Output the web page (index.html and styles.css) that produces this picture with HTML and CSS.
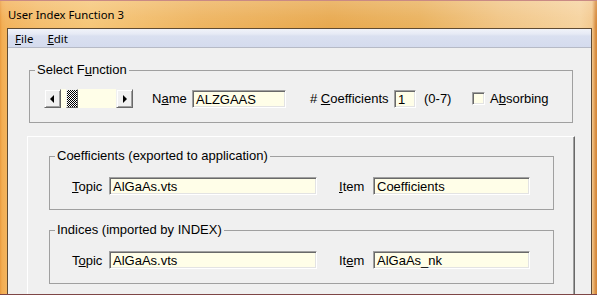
FILE: index.html
```html
<!DOCTYPE html>
<html>
<head>
<meta charset="utf-8">
<title>User Index Function 3</title>
<link rel="stylesheet" href="styles.css">
</head>
<body>
<div class="window">
  <div class="titlebar">User Index Function 3</div>
  <div class="frame">
    <div class="client">
      <div class="menubar">
        <span class="menu-item"><u>F</u>ile</span>
        <span class="menu-item"><u>E</u>dit</span>
      </div>
      <div class="content">
        <fieldset class="group group-select">
          <legend>Select F<u>u</u>nction</legend>
          <div class="row row-select">
            <div class="hscroll">
              <div class="sb-btn"><span class="arrow arrow-left"></span></div>
              <div class="sb-track"><div class="sb-thumb"></div></div>
              <div class="sb-btn"><span class="arrow arrow-right"></span></div>
            </div>
            <span class="label label-name">N<u>a</u>me</span>
            <div class="field field-name">ALZGAAS</div>
            <span class="label label-coef"># <u>C</u>oefficients</span>
            <div class="field field-coef">1</div>
            <span class="label label-range">(0-7)</span>
            <span class="checkbox"></span>
            <span class="label label-abs">A<u>b</u>sorbing</span>
          </div>
        </fieldset>
        <div class="panel">
          <fieldset class="group group-sub">
            <legend>Coefficients (exported to application)</legend>
            <div class="row row-sub">
              <span class="label label-topic"><u>T</u>opic</span>
              <div class="field field-topic">AlGaAs.vts</div>
              <span class="label label-item"><u>I</u>tem</span>
              <div class="field field-item">Coefficients</div>
            </div>
          </fieldset>
          <fieldset class="group group-sub group-second">
            <legend>Indices (imported by INDEX)</legend>
            <div class="row row-sub">
              <span class="label label-topic">T<u>o</u>pic</span>
              <div class="field field-topic">AlGaAs.vts</div>
              <span class="label label-item">It<u>e</u>m</span>
              <div class="field field-item">AlGaAs_nk</div>
            </div>
          </fieldset>
        </div>
      </div>
    </div>
  </div>
</div>
</body>
</html>
```
FILE: styles.css
```css
* { box-sizing: border-box; }
html, body { margin: 0; padding: 0; }
body {
  width: 597px;
  height: 295px;
  overflow: hidden;
  font-family: "Liberation Sans", Arial, sans-serif;
  font-size: 13px;
  color: #000;
}
u { text-underline-offset: 1px; }
.window {
  width: 597px;
  height: 295px;
  display: flex;
  flex-direction: column;
  border-bottom: 1px solid #7e4646;
  background: linear-gradient(90deg, #e9993c 0, #f2ad52 2px, #f3b35c 6px, #f4bd6c 40px, #f6c678 90px, #eeb460 200px, #e8a94f 330px, #eab25e 420px, #f1c585 500px, #f6d39f 580px, #f3c98f 592px, #d5883a 596px);
}
.titlebar {
  height: 28px;
  line-height: 28px;
  padding-left: 8px;
  font-family: "Noto Sans", "Liberation Sans", sans-serif;
  font-size: 11.3px;
  border-top: 1px solid #c98a84;
  background: linear-gradient(180deg, rgba(255,255,255,0.18) 0, rgba(255,255,255,0.05) 60%, rgba(255,255,255,0.0) 100%);
}
.frame {
  flex: 1;
  display: flex;
  padding: 0 5px 0 7px;
  min-height: 0;
}
.client {
  flex: 1;
  display: flex;
  flex-direction: column;
  background: #f0f0f0;
  border: 1px solid #5e4a33;
  border-bottom: none;
  min-height: 0;
}
.menubar {
  height: 19px;
  display: flex;
  align-items: center;
  padding-left: 7px;
  border-bottom: 1px solid #b6bac6;
  background: linear-gradient(180deg, #f1f3f9 0, #e6eaf5 5px, #dae0f0 7px, #d4dbee 100%);
  font-family: "Noto Sans", "Liberation Sans", sans-serif;
  font-size: 11.5px;
}
.menu-item { margin-right: 14px; }
.content {
  flex: 1;
  display: flex;
  flex-direction: column;
  padding: 15px 0 0 21px;
  min-height: 0;
}
.group {
  margin: 0;
  padding: 0;
  border: 1px solid #a0a0a0;
  min-width: 0;
}
.group legend {
  margin-left: 5px;
  padding: 0 2px;
  line-height: 14px;
  height: 14px;
}
.group-select { width: 544px; }
.row { display: flex; align-items: center; }
.row-select { padding: 12px 0 14px 14px; }
.hscroll {
  display: flex;
  width: 89px;
  height: 19px;
  background: #fffee8;
}
.sb-btn {
  width: 17px;
  height: 19px;
  background: #f0f0f0;
  border: 1px solid;
  border-color: #f0f0f0 #696969 #696969 #f0f0f0;
  box-shadow: inset 1px 1px #fff, inset -1px -1px #a0a0a0;
  display: flex;
  align-items: center;
  justify-content: center;
}
.arrow { width: 0; height: 0; border-top: 4px solid transparent; border-bottom: 4px solid transparent; }
.arrow-left { border-right: 4px solid #000; margin-right: 1px; }
.arrow-right { border-left: 4px solid #000; margin-left: 1px; }
.sb-track { flex: 1; padding-left: 5px; }
.sb-thumb {
  width: 12px;
  height: 19px;
  border: 1px solid;
  border-color: #f0f0f0 #696969 #696969 #f0f0f0;
  background: repeating-conic-gradient(#000 0 25%, #fff 0 50%) 0 0 / 2px 2px;
}
.label { white-space: nowrap; }
.label-name { margin-left: 19px; width: 40px; }
.field {
  height: 18px;
  border: 1px solid;
  border-color: #a0a0a0 #fff #fff #a0a0a0;
  box-shadow: inset 1px 1px #696969, inset -1px -1px #e3e3e3;
  background: #fffee8;
  padding-left: 3px;
  line-height: 17px;
  white-space: nowrap;
  overflow: hidden;
}
.field-name { width: 94px; }
.label-coef { margin-left: 24px; width: 84px; }
.field-coef { width: 22px; }
.label-range { margin-left: 8px; width: 48px; }
.checkbox {
  width: 13px;
  height: 13px;
  border: 1px solid;
  border-color: #a0a0a0 #fff #fff #a0a0a0;
  box-shadow: inset 1px 1px #696969, inset -1px -1px #e3e3e3;
  background: #fffee8;
}
.label-abs { margin-left: 5px; }
.panel {
  flex: 1;
  width: 548px;
  margin: 13px 0 0 -2px;
  padding: 12px 0 0 21px;
  border-top: 1px solid #fff;
  border-left: 1px solid #fff;
  border-right: 1px solid #696969;
  box-shadow: inset -1px 0 #a0a0a0;
}
.group-sub { width: 505px; }
.group-second { margin-top: 13px; }
.row-sub { padding: 14px 0 14px 22px; }
.label-topic { width: 37px; }
.field-topic { width: 208px; }
.label-item { margin-left: 22px; width: 34px; }
.field-item { width: 157px; }
```
